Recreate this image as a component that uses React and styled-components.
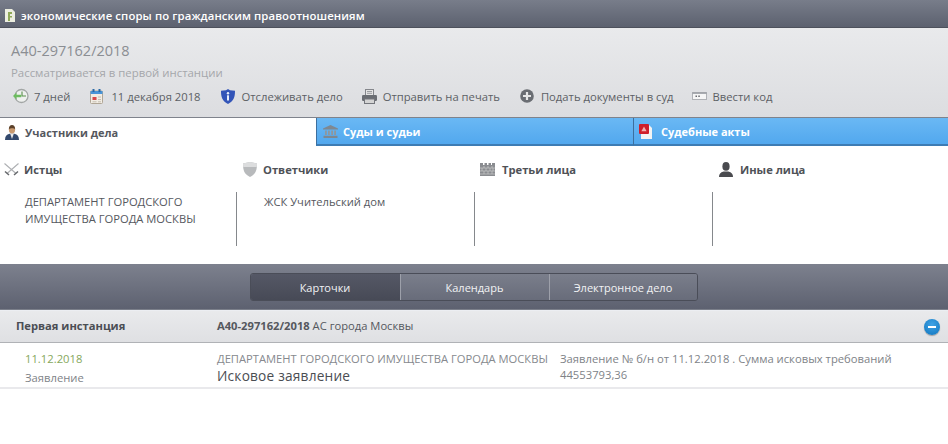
import styled, { createGlobalStyle } from "styled-components";

const Global = createGlobalStyle`
  html, body { margin: 0; padding: 0; background: #fff; }
  body { font-family: "Open Sans", "Noto Sans", sans-serif; overflow: hidden; }
  * { box-sizing: border-box; }
`;

const IconBox = styled.svg`
  flex: none;
  display: block;
`;

const DocIcon = () => (
  <IconBox width="10" height="13" viewBox="0 0 10 13">
    <path d="M0 0h7l3 3v10H0z" fill="#eceee0" />
    <path d="M3 3h4v2H5v2h2v1.500H5V12H3z" fill="#8fa858" />
  </IconBox>
);

const ClockIcon = () => (
  <IconBox width="16" height="16" viewBox="0 0 16 16">
    <circle cx="8.500" cy="8" r="6.500" fill="#eef0ee" stroke="#a2a6a5" strokeWidth="1.300" />
    <path d="M9 3.500V8h4" fill="none" stroke="#5a8f4c" strokeWidth="1.100" />
    <path d="M0 8l3.600-3.600v2.300h4.600v2.600H3.600v2.300z" fill="#6cbb5f" />
  </IconBox>
);

const CalendarIcon = () => (
  <IconBox width="13" height="15" viewBox="0 0 13 15">
    <rect x="0.500" y="2" width="12" height="12.500" rx="1" fill="#f2ede4" stroke="#b0a696" />
    <rect x="0.500" y="2" width="12" height="3" fill="#4a95d8" />
    <rect x="2.500" y="0" width="2" height="3" fill="#2b6aa6" />
    <rect x="8.500" y="0" width="2" height="3" fill="#2b6aa6" />
    <rect x="2.500" y="8" width="4" height="3" fill="#d8494a" />
    <path d="M8 8h3M8 10.500h3M8 12.800h3M2.500 12.800h4" stroke="#c4bdb0" />
  </IconBox>
);

const ShieldInfoIcon = () => (
  <IconBox width="14" height="15" viewBox="0 0 14 15">
    <path d="M7 0l2 1.300L14 1.700c0 6-1 10.300-7 13.300C1 12 0 7.700 0 1.700l5-.4z" fill="#3355b8" />
    <circle cx="7" cy="4.300" r="1.200" fill="#e8eefa" />
    <rect x="6" y="6.300" width="2" height="5.200" fill="#e8eefa" />
  </IconBox>
);

const PrinterIcon = () => (
  <IconBox width="15" height="15" viewBox="0 0 15 15">
    <rect x="3.500" y="0.500" width="8" height="6" fill="#e4e4e4" stroke="#85878c" />
    <path d="M5 2.500h5M5 4.300h5" stroke="#9a9ca0" />
    <rect x="0" y="6" width="15" height="6" rx="1.200" fill="#6a6d73" />
    <rect x="2.500" y="10" width="10" height="4.500" fill="#d4d4d4" stroke="#74767c" />
  </IconBox>
);

const PlusIcon = () => (
  <IconBox width="14" height="14" viewBox="0 0 14 14">
    <circle cx="7" cy="7" r="6.800" fill="#6a6d73" />
    <path d="M7 3v8M3 7h8" stroke="#e6e7e8" strokeWidth="2.200" />
  </IconBox>
);

const CodeIcon = () => (
  <IconBox width="15" height="8" viewBox="0 0 15 8">
    <rect x="0.500" y="0.500" width="14" height="7" fill="#f6f6f6" stroke="#b0b2b6" />
    <rect x="0.500" y="0.500" width="14" height="1.300" fill="#95989e" />
    <path d="M3.500 4.200h1.500M6.300 4.200h1.500" stroke="#66686d" strokeWidth="1.500" />
  </IconBox>
);

const PersonTieIcon = () => (
  <IconBox width="14" height="15" viewBox="0 0 14 15">
    <path d="M0 15c0-3.600 1.500-5.400 4.600-6.200h4.800C12.500 9.600 14 11.400 14 15z" fill="#33496d" />
    <path d="M5.200 8.800h3.600L7 14z" fill="#e8e8ea" />
    <ellipse cx="7" cy="4.800" rx="3.100" ry="3.800" fill="#c99a70" />
    <path d="M3.800 4.400C3.800 1.300 5.200 0 7 0s3.200 1.300 3.200 4.400C9 3 5.500 3 3.800 4.400z" fill="#5b4029" />
  </IconBox>
);

const BankIcon = () => (
  <IconBox width="15" height="13" viewBox="0 0 15 13">
    <path d="M7.500 0L15 3.500v1H0v-1z" fill="#7f8890" />
    <path d="M2 5.500h1.800V10H2zM5 5.500h1.800V10H5zM8.200 5.500H10V10H8.200zM11.200 5.500H13V10h-1.800z" fill="#8f979d" />
    <rect x="0.500" y="10.800" width="14" height="2.200" fill="#7f8890" />
  </IconBox>
);

const PdfIcon = () => (
  <IconBox width="13" height="15" viewBox="0 0 13 15">
    <path d="M2 1h8l3 3v11H2z" fill="#f3f3f3" />
    <rect x="0" y="0" width="10" height="10" rx="1" fill="#cf1f2a" />
    <path d="M5 2.500l2.600 4.800H2.400z" fill="#f2b0b0" />
  </IconBox>
);

const SwordsIcon = () => (
  <IconBox width="15" height="13" viewBox="0 0 15 13">
    <path d="M14.500 0.500L3 10.500M0.500 0.500L12 10.500" stroke="#aeb0b3" strokeWidth="1.100" />
    <path d="M1 8.500l4 3.500M14 8.500l-4 3.500" stroke="#66686c" strokeWidth="1.500" />
  </IconBox>
);

const ShieldIcon = () => (
  <IconBox width="14" height="15" viewBox="0 0 14 15">
    <path d="M7 0l7 1.600C14 8 13 12.400 7 15 1 12.400 0 8 0 1.600z" fill="#b8babc" />
    <path d="M7 0l7 1.600c0 1.200 0 2.400-.2 3.400H.2C0 4 0 2.800 0 1.600z" fill="#dcddde" />
  </IconBox>
);

const WallIcon = () => (
  <IconBox width="15" height="13" viewBox="0 0 15 13">
    <path d="M0 0h3v2h1.500V0h2.500v2h1.500V0H11v2h1V0h3v13H0z" fill="#8a8c90" />
    <path d="M0 5h15M0 8h15M0 11h15M4 3v2M8 3v2M12 3v2M2 5v3M6 5v3M10 5v3M13 5v3M4 8v3M8 8v3M12 8v3" stroke="#c9cacc" strokeWidth="0.700" />
  </IconBox>
);

const PersonIcon = () => (
  <IconBox width="14" height="15" viewBox="0 0 14 15">
    <ellipse cx="7" cy="4.400" rx="3.600" ry="4.400" fill="#4a4b4f" />
    <path d="M0 15c0-3 1.400-4.600 4.600-5.400h4.800C12.600 10.400 14 12 14 15z" fill="#4a4b4f" />
  </IconBox>
);

const MinusBadge = styled.span`
  position: absolute;
  right: 8px;
  top: 8px;
  width: 16px;
  height: 16px;
  border-radius: 50%;
  background: radial-gradient(circle at 50% 35%, #3fa3e6, #0f74bd);
  box-shadow: 0 1px 1px rgba(0, 0, 0, 0.3);
  display: flex;
  align-items: center;
  justify-content: center;
  &::after {
    content: "";
    width: 8px;
    height: 2px;
    background: #fff;
  }
`;

const Page = styled.div`
  width: 948px;
  height: 444px;
  background: #fff;
  display: flex;
  flex-direction: column;
`;

const TitleBar = styled.header`
  height: 28px;
  display: flex;
  align-items: center;
  gap: 6px;
  padding: 3px 0 0 5px;
  background: linear-gradient(#787d8a, #5c616f);
  border-bottom: 1px solid #4d515c;
  color: #fff;
  font-size: 11.350px;
  font-weight: 600;
  letter-spacing: 0.1px;
`;

const CaseHead = styled.section`
  height: 90px;
  padding: 13px 0 0 11px;
  background: linear-gradient(#e9eaec, #dcdde0);
  border-bottom: 1px solid #7f838c;
`;

const CaseNumber = styled.div`
  font-size: 14.500px;
  line-height: 20px;
  color: #8b8e93;
`;

const CaseStatus = styled.div`
  margin-top: 4px;
  font-size: 11.400px;
  line-height: 16px;
  color: #a5a7ab;
`;

const ActionRow = styled.div`
  margin-top: 7px;
  padding-left: 2px;
  display: flex;
  align-items: center;
  color: #5c5f65;
  font-size: 11.250px;
`;

const Action = styled.div`
  display: flex;
  align-items: center;
  gap: ${(p) => p.$gap}px;
  margin-right: ${(p) => p.$after}px;
  white-space: nowrap;
`;

const Tabs = styled.nav`
  height: 28px;
  display: flex;
`;

const Tab = styled.div`
  width: ${(p) => p.$width}px;
  display: flex;
  align-items: center;
  gap: ${(p) => p.$gap}px;
  padding-left: ${(p) => p.$pad}px;
  font-size: 11px;
  font-weight: 700;
  color: ${(p) => (p.$active ? "#55585e" : "#fff")};
  background: ${(p) =>
    p.$active ? "#fff" : "linear-gradient(#6ab8f4, #52a8ee)"};
  border-bottom: ${(p) => (p.$active ? "none" : "2px solid #3d7cb4")};
  border-left: ${(p) => (p.$active ? "none" : "1px solid #3d6f9e")};
`;

const Parties = styled.section`
  height: 118px;
  display: grid;
  grid-template-columns: repeat(4, 238px);
  padding-top: 15px;
  background: #fff;
`;

const Party = styled.div`
  display: flex;
  flex-direction: column;
`;

const PartyHead = styled.div`
  height: 16px;
  display: flex;
  align-items: center;
  gap: ${(p) => p.$gap}px;
  padding-left: ${(p) => p.$pad}px;
  font-size: 11.200px;
  font-weight: 700;
  color: #4f5257;
`;

const PartyBody = styled.div`
  margin: 15px 1px 0 0;
  height: 54px;
  padding: 1px 30px 0 ${(p) => p.$pad || 25}px;
  font-size: 11.200px;
  line-height: 17px;
  color: #55585e;
  border-right: ${(p) => (p.$last ? "none" : "1px solid #85888c")};
`;

const ViewBar = styled.section`
  height: 46px;
  display: flex;
  justify-content: center;
  align-items: center;
  padding-right: 1px;
  background: linear-gradient(#7d818e, #5d6170);
  border-bottom: 1px solid #7b7f8a;
`;

const Segments = styled.div`
  display: flex;
  height: 28px;
  border: 1px solid #4a4d58;
  border-radius: 3px;
  overflow: hidden;
`;

const Segment = styled.div`
  width: ${(p) => p.$width}px;
  display: flex;
  align-items: center;
  justify-content: center;
  padding-top: 1px;
  font-size: 11px;
  color: #f1f2f4;
  background: ${(p) =>
    p.$active
      ? "linear-gradient(#555866, #474a56)"
      : "linear-gradient(#7a7e8b, #686c7a)"};
  border-left: ${(p) => (p.$first ? "none" : "1px solid #9da0aa")};
`;

const StageHead = styled.div`
  position: relative;
  height: 33px;
  display: flex;
  align-items: center;
  padding: 0 0 2px 16px;
  background: linear-gradient(#e9eaec, #dfe0e3);
  border-top: 1px solid #eceef2;
  border-bottom: 1px solid #b0b2b6;
  font-size: 11.200px;
  color: #55585e;
`;

const StageName = styled.div`
  width: 201px;
  font-weight: 700;
  color: #4b4e54;
`;

const StageCase = styled.div`
  strong {
    font-weight: 700;
  }
`;

const EventRow = styled.div`
  height: 46px;
  display: flex;
  border-bottom: 2px solid #e9e9ec;
  font-size: 11.250px;
`;

const EventDate = styled.div`
  width: 217px;
  padding: 7px 0 0 25px;
  line-height: 17px;
`;

const DateText = styled.div`
  color: #86a85c;
`;

const EventType = styled.div`
  margin-top: 2px;
  color: #808388;
`;

const EventMain = styled.div`
  width: 343px;
  padding-top: 7px;
  font-size: 11.200px;
  line-height: 17px;
  color: #86898e;
  white-space: nowrap;
`;

const EventTitle = styled.div`
  font-size: 13.700px;
  line-height: 18px;
  color: #4a4d52;
  letter-spacing: 0.2px;
`;

const EventNote = styled.div`
  width: 350px;
  padding-top: 8px;
  line-height: 16px;
  color: #808388;
`;

export default function App() {
  return (
    <Page>
      <Global />
      <TitleBar>
        <DocIcon />
        экономические споры по гражданским правоотношениям
      </TitleBar>

      <CaseHead>
        <CaseNumber>А40-297162/2018</CaseNumber>
        <CaseStatus>Рассматривается в первой инстанции</CaseStatus>
        <ActionRow>
          <Action $after={20} $gap={5}><ClockIcon />7 дней</Action>
          <Action $after={20} $gap={8}><CalendarIcon />11 декабря 2018</Action>
          <Action $after={19} $gap={7}><ShieldInfoIcon />Отслеживать дело</Action>
          <Action $after={20} $gap={6}><PrinterIcon />Отправить на печать</Action>
          <Action $after={18} $gap={7}><PlusIcon />Подать документы в суд</Action>
          <Action $after={0} $gap={6}><CodeIcon />Ввести код</Action>
        </ActionRow>
      </CaseHead>

      <Tabs>
        <Tab $active $width={316} $pad={5} $gap={6}><PersonTieIcon />Участники дела</Tab>
        <Tab $width={317} $pad={6} $gap={5}><BankIcon />Суды и судьи</Tab>
        <Tab $width={315} $pad={5} $gap={9}><PdfIcon />Судебные акты</Tab>
      </Tabs>

      <Parties>
        <Party>
          <PartyHead $pad={4} $gap={5}><SwordsIcon />Истцы</PartyHead>
          <PartyBody>ДЕПАРТАМЕНТ ГОРОДСКОГО ИМУЩЕСТВА ГОРОДА МОСКВЫ</PartyBody>
        </Party>
        <Party>
          <PartyHead $pad={5} $gap={6}><ShieldIcon />Ответчики</PartyHead>
          <PartyBody $pad={26}>ЖСК Учительский дом</PartyBody>
        </Party>
        <Party>
          <PartyHead $pad={4} $gap={7}><WallIcon />Третьи лица</PartyHead>
          <PartyBody />
        </Party>
        <Party>
          <PartyHead $pad={5} $gap={7}><PersonIcon />Иные лица</PartyHead>
          <PartyBody $last />
        </Party>
      </Parties>

      <ViewBar>
        <Segments>
          <Segment $active $first $width={149}>Карточки</Segment>
          <Segment $width={149}>Календарь</Segment>
          <Segment $width={148}>Электронное дело</Segment>
        </Segments>
      </ViewBar>

      <StageHead>
        <StageName>Первая инстанция</StageName>
        <StageCase><strong>А40-297162/2018</strong> АС города Москвы</StageCase>
        <MinusBadge />
      </StageHead>

      <EventRow>
        <EventDate>
          <DateText>11.12.2018</DateText>
          <EventType>Заявление</EventType>
        </EventDate>
        <EventMain>
          ДЕПАРТАМЕНТ ГОРОДСКОГО ИМУЩЕСТВА ГОРОДА МОСКВЫ
          <EventTitle>Исковое заявление</EventTitle>
        </EventMain>
        <EventNote>
          Заявление № б/н от 11.12.2018 . Сумма исковых требований 44553793,36
        </EventNote>
      </EventRow>
    </Page>
  );
}
